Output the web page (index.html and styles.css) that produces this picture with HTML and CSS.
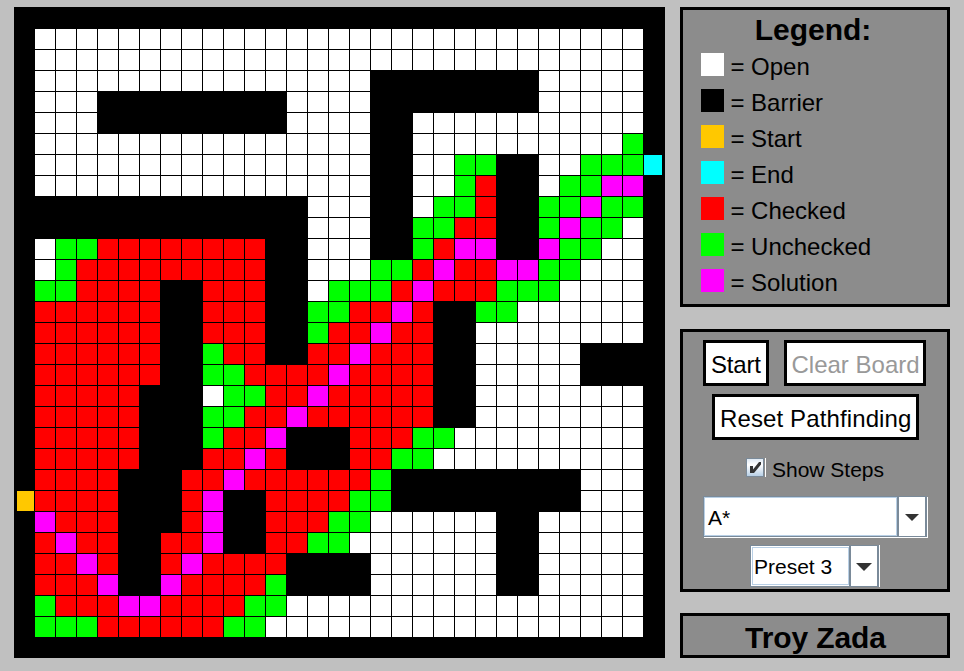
FILE: index.html
```html
<!DOCTYPE html>
<html lang="en">
<head>
<meta charset="utf-8">
<title>Pathfinding</title>
<link rel="stylesheet" href="styles.css">
</head>
<body>
<main class="app">
  <div class="board" id="board"></div>
  <aside class="side">
    <section class="panel legend">
      <h1 class="title">Legend:</h1>
      <ul class="keys">
        <li class="key"><span class="swatch open"></span><span class="name">= Open</span></li>
        <li class="key"><span class="swatch barrier"></span><span class="name">= Barrier</span></li>
        <li class="key"><span class="swatch start"></span><span class="name">= Start</span></li>
        <li class="key"><span class="swatch end"></span><span class="name">= End</span></li>
        <li class="key"><span class="swatch checked"></span><span class="name">= Checked</span></li>
        <li class="key"><span class="swatch unchecked"></span><span class="name">= Unchecked</span></li>
        <li class="key"><span class="swatch solution"></span><span class="name">= Solution</span></li>
      </ul>
    </section>
    <section class="panel controls">
      <div class="row">
        <button class="btn btn-start">Start</button>
        <button class="btn btn-clear" disabled>Clear Board</button>
      </div>
      <button class="btn btn-reset">Reset Pathfinding</button>
      <label class="steps">
        <svg class="check" width="20" height="20" viewBox="0 0 20 20" shape-rendering="crispEdges">
          <defs><linearGradient id="g" x1="0" y1="0" x2="0" y2="1"><stop offset="0" stop-color="#dfe9f3"/><stop offset=".35" stop-color="#fff"/><stop offset="1" stop-color="#b8cfe5"/></linearGradient></defs>
          <path fill="#fff" d="M19 0h1v19h-1z"/>
          <path fill="#7a8a99" d="M0 0h18v19H0z"/>
          <path fill="url(#g)" d="M1 1h16v17H1z"/>
          <path fill="#333" shape-rendering="auto" d="M4 8h3v3.5L13 4h2v2.5L8 15H4z"/>
        </svg>
        <span class="steps-text">Show Steps</span>
      </label>
      <div class="combo combo-algo">
        <span class="value">A*</span>
        <span class="arrow"><svg width="14" height="7" viewBox="0 0 14 7"><path fill="#333" d="M0 0h14L7 7z"/></svg></span>
      </div>
      <div class="combo combo-preset">
        <span class="value">Preset 3</span>
        <span class="arrow"><svg width="16" height="8" viewBox="0 0 16 8"><path fill="#333" d="M0 0h16L8 8z"/></svg></span>
      </div>
    </section>
    <section class="panel author"><h2 class="title">Troy Zada</h2></section>
  </aside>
</main>
<script src="board.js"></script>
</body>
</html>
```
FILE: styles.css
```css
* { box-sizing: border-box; }
body {
  margin: 0;
  background: #c0c0c0;
  color: #000;
  font-family: "Liberation Sans", Arial, sans-serif;
}
.app {
  display: flex;
  gap: 15px;
  height: 671px;
  padding: 7px 0 0 14px;
}
.board {
  display: grid;
  grid-template-columns: 17px repeat(29, 20px) 18px;
  grid-template-rows: 18px repeat(29, 20px) 17px;
  gap: 1px;
  width: 651px;
  height: 651px;
  border: 3px solid #000;
  background: #000;
}
.open { background: #fff; }
.barrier { background: #000; }
.start { background: #ffc800; }
.end { background: #0ff; }
.checked { background: #f00; }
.unchecked { background: #0f0; }
.solution { background: #f0f; }

.side {
  display: flex;
  flex-direction: column;
  width: 270px;
}
.panel {
  border: 3px solid #000;
  background: #8c8c8c;
}
.title {
  margin: 0;
  font-size: 30px;
  line-height: 34px;
  font-weight: bold;
  text-align: center;
}
.legend { height: 300px; padding-top: 3px; }
.legend .title { padding-right: 4px; }
.keys {
  display: flex;
  flex-direction: column;
  gap: 8px;
  margin: 4px 0 0;
  padding: 0 0 0 18px;
  list-style: none;
}
.key {
  display: flex;
  align-items: center;
  gap: 6.4px;
  height: 28px;
  font-size: 24px;
  line-height: 28px;
}
.key .swatch { width: 23px; height: 23px; margin-bottom: 1px; }
.key .name { padding-top: 4px; }

.controls {
  display: flex;
  flex-direction: column;
  align-items: center;
  height: 263px;
  margin-top: 22px;
  padding-top: 8px;
}
.row { display: flex; gap: 15px; margin-right: 2px; }
.btn {
  height: 46px;
  padding: 4px 0 0 5px;
  border: 3px solid #000;
  background: #fff;
  color: #000;
  font: 24px/32px "Liberation Sans", Arial, sans-serif;
  text-align: left;
  white-space: nowrap;
  overflow: hidden;
}
.btn-start { width: 66px; letter-spacing: -0.2px; }
.btn-clear { width: 142px; color: #999; }
.btn-reset { width: 207px; margin-top: 8px; letter-spacing: 0.12px; }
.btn-start, .btn-reset { padding-left: 5.5px; }
.steps {
  display: flex;
  gap: 6px;
  height: 24px;
  margin-top: 18px;
}
.steps-text { font-size: 21px; line-height: 24px; }
.combo {
  display: flex;
  border: 1px solid #7a8a99;
  background: #fff;
  box-shadow: 1px 1px 0 #fff;
}
.value {
  flex: 1;
  border: 1px solid #b8cfe5;
  padding-left: 3px;
  font-size: 21px;
}
.arrow {
  display: flex;
  align-items: center;
  justify-content: center;
  padding-top: 2px;
  border-left: 2px solid #7a8a99;
}
.combo-algo { width: 224px; height: 41px; margin: 14px 0 0; border-right-width: 2px; }
.combo-algo .value { line-height: 39px; }
.combo-algo .arrow { width: 28px; }
.combo-preset { width: 129px; height: 42px; margin: 8px 1px 0 0; border-right-width: 2px; box-shadow: 1px 0 0 #fff; }
.combo-preset .value { margin: 1px 0 1px 1px; padding-left: 1px; line-height: 38px; }
.combo-preset .arrow { width: 28px; }
.author { height: 45px; margin-top: 21px; padding-top: 5px; }
.author .title { letter-spacing: -0.1px; padding-left: 1px; }
```
FILE: board.js
```js
const KINDS = {
  '.': 'open', '#': 'barrier', 'r': 'checked', 'g': 'unchecked',
  'm': 'solution', 'S': 'start', 'E': 'end'
};
const ROWS = [
  '.............................',
  '.............................',
  '................########.....',
  '...#########....########.....',
  '...#########....##...........',
  '................##..........g',
  '................##..gg##..ggg',
  '................##..gr##.ggmm',
  '#############...##.ggr##ggmgg',
  '#############...##ggrr##gmgg.',
  '.ggrrrrrrrr##...##grmm##mgg..',
  '.grrrrrrrrr##...ggrmrrmmgg...',
  'ggrrrr##rrr##.gggrmrrrggg....',
  'rrrrrr##rrr##ggrrmr##gg......',
  'rrrrrr##rrr##grrmrr##........',
  'rrrrrr##grr##rrmrrr##.....###',
  'rrrrrr##ggrrrrmrrrr##.....###',
  'rrrrr###.ggrrmrrrrr##........',
  'rrrrr###ggrrmrrrrrr##........',
  'rrrrr###grrm###rrrgg.........',
  'rrrrr###rrmr###rrgg..........',
  'rrrr###rrmrrrrrrg#########...',
  'rrrr###rm##rrrrgg#########...',
  'mrrr###rm##rrrgg......##.....',
  'rmrr##rrm##rrgg.......##.....',
  'rrmr##rmrrrr####......##.....',
  'rrrm##mrrrrg####......##.....',
  'grrrmmrrrrgg.................',
  'gggrrrrrrgg..................'
];
const START_ROW = 22;
const END_ROW = 6;
const edge = '#'.repeat(31);
const full = [edge]
  .concat(ROWS.map((row, i) => (i === START_ROW ? 'S' : '#') + row + (i === END_ROW ? 'E' : '#')))
  .concat(edge);
const board = document.getElementById('board');
for (const ch of full.join('')) {
  const cell = document.createElement('div');
  cell.className = KINDS[ch];
  board.appendChild(cell);
}
```
